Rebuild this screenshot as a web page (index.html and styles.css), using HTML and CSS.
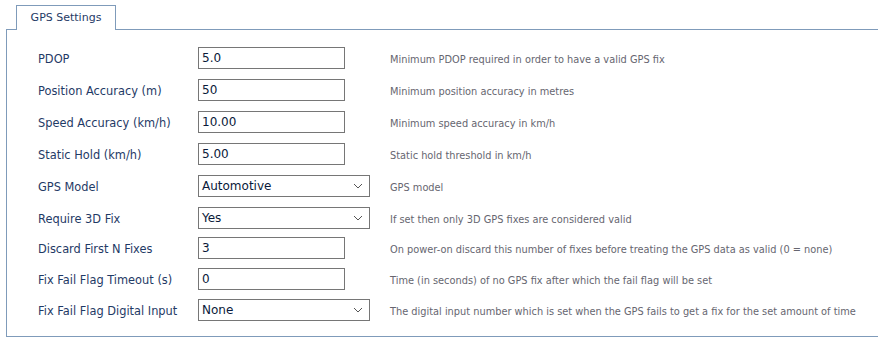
FILE: index.html
```html
<!DOCTYPE html>
<html lang="en">
<head>
    <meta charset="UTF-8">
    <title>GPS Settings</title>
    <link rel="stylesheet" href="styles.css">
</head>
<body>
    <div class="tabs">
        <div class="tab active">GPS Settings</div>
    </div>
    <div class="panel">
        <div class="row">
            <label>PDOP</label>
            <input type="text" value="5.0">
            <span class="help">Minimum PDOP required in order to have a valid GPS fix</span>
        </div>
        <div class="row">
            <label>Position Accuracy (m)</label>
            <input type="text" value="50">
            <span class="help">Minimum position accuracy in metres</span>
        </div>
        <div class="row">
            <label>Speed Accuracy (km/h)</label>
            <input type="text" value="10.00">
            <span class="help">Minimum speed accuracy in km/h</span>
        </div>
        <div class="row">
            <label>Static Hold (km/h)</label>
            <input type="text" value="5.00">
            <span class="help">Static hold threshold in km/h</span>
        </div>
        <div class="row">
            <label>GPS Model</label>
            <div class="select"><span>Automotive</span><svg width="10" height="6" viewBox="0 0 10 6"><path d="M1 1 L5 5 L9 1" fill="none" stroke="#555" stroke-width="1"/></svg></div>
            <span class="help">GPS model</span>
        </div>
        <div class="row">
            <label>Require 3D Fix</label>
            <div class="select"><span>Yes</span><svg width="10" height="6" viewBox="0 0 10 6"><path d="M1 1 L5 5 L9 1" fill="none" stroke="#555" stroke-width="1"/></svg></div>
            <span class="help">If set then only 3D GPS fixes are considered valid</span>
        </div>
        <div class="row">
            <label>Discard First N Fixes</label>
            <input type="text" value="3">
            <span class="help">On power-on discard this number of fixes before treating the GPS data as valid (0 = none)</span>
        </div>
        <div class="row">
            <label>Fix Fail Flag Timeout (s)</label>
            <input type="text" value="0">
            <span class="help">Time (in seconds) of no GPS fix after which the fail flag will be set</span>
        </div>
        <div class="row">
            <label>Fix Fail Flag Digital Input</label>
            <div class="select"><span>None</span><svg width="10" height="6" viewBox="0 0 10 6"><path d="M1 1 L5 5 L9 1" fill="none" stroke="#555" stroke-width="1"/></svg></div>
            <span class="help">The digital input number which is set when the GPS fails to get a fix for the set amount of time</span>
        </div>
    </div>
</body>
</html>
```

FILE: styles.css
```css
body {
    margin: 0;
    padding: 5px 0 0 6px;
    font-family: "DejaVu Sans", Verdana, sans-serif;
    background: #fff;
    overflow: hidden;
}
.tabs {
    display: flex;
    padding-left: 10px;
}
.tab {
    width: 98px;
    height: 24px;
    border: 1px solid #7f9bba;
    border-bottom: none;
    background: #fff;
    color: #1f3a66;
    font-size: 11px;
    line-height: 24px;
    text-align: center;
    margin-bottom: -1px;
    position: relative;
}
.panel {
    border: 1px solid #7f9bba;
    border-right: none;
    height: 308px;
    padding: 17px 0 0 31px;
    box-sizing: border-box;
}
.row {
    display: flex;
    align-items: center;
    height: 22px;
    margin-bottom: 10px;
}
.row:nth-child(6) {
    margin-bottom: 8px;
}
.row:nth-child(7), .row:nth-child(8) {
    margin-bottom: 9px;
}
.row label {
    width: 160px;
    font-size: 11.4px;
    color: #1f3a66;
    padding-top: 2px;
}
.row input, .select {
    box-sizing: border-box;
    height: 22px;
    border: 1px solid #767676;
    font-family: Tahoma, "DejaVu Sans", sans-serif;
    font-size: 12px;
    color: #0a1a3a;
    padding: 0 3px;
    margin: 0;
    outline: none;
}
.row input {
    width: 147px;
    margin-right: 45px;
}
.select {
    width: 172px;
    margin-right: 20px;
    display: flex;
    align-items: center;
    justify-content: space-between;
    padding-right: 6px;
}
.help {
    font-size: 9.8px;
    color: #666670;
    padding-top: 3px;
}
```
